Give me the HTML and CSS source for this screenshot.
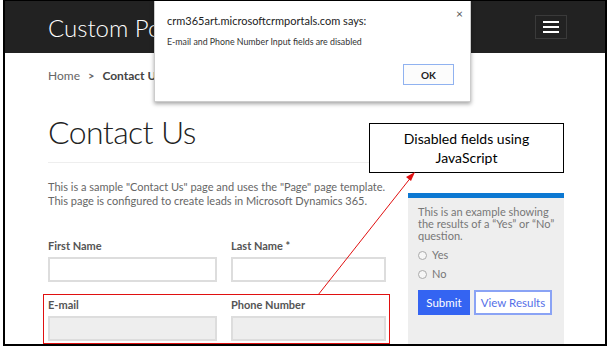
FILE: index.html
```html
<!DOCTYPE html>
<html lang="en">
  <head>
    <meta charset="UTF-8" />
    <meta name="viewport" content="width=device-width, initial-scale=1.0" />
    <title>Contact Us</title>
    <link rel="stylesheet" href="styles.css">
  </head>
  <body>
    <div class="frame">
      <header class="topbar">
        <span class="brand">Custom Portal</span>
        <button class="menu-toggle" type="button">
          <span></span><span></span><span></span>
        </button>
      </header>
      <div class="page">
        <ol class="crumbs">
          <li>Home</li>
          <li class="sep">&gt;</li>
          <li class="current">Contact Us</li>
        </ol>
        <div class="columns">
          <main class="main">
            <h1>Contact Us</h1>
            <p class="intro">This is a sample "Contact Us" page and uses the "Page" page template.<br>This page is configured to create leads in Microsoft Dynamics 365.</p>
            <form class="contact-form" action="#">
              <div class="field">
                <label for="firstname">First Name</label>
                <input type="text" id="firstname" />
              </div>
              <div class="field">
                <label for="lastname">Last Name *</label>
                <input type="text" id="lastname" />
              </div>
              <div class="field">
                <label for="email">E-mail</label>
                <input type="text" id="email" disabled />
              </div>
              <div class="field">
                <label for="phone">Phone Number</label>
                <input type="text" id="phone" disabled />
              </div>
            </form>
          </main>
          <aside class="poll">
            <p>This is an example showing<br>the results of a “Yes” or “No”<br>question.</p>
            <label class="option"><span class="radio"></span>Yes</label>
            <label class="option"><span class="radio"></span>No</label>
            <div class="poll-actions">
              <button class="btn-submit" type="button">Submit</button>
              <button class="btn-results" type="button">View Results</button>
            </div>
          </aside>
        </div>
      </div>

      <div class="dialog">
        <span class="dialog-close">×</span>
        <p class="dialog-title">crm365art.microsoftcrmportals.com says:</p>
        <p class="dialog-text">E-mail and Phone Number Input fields are disabled</p>
        <div class="dialog-actions">
          <button type="button">OK</button>
        </div>
      </div>

      <div class="highlight"></div>
      <div class="callout">Disabled fields using<br>JavaScript</div>
      <svg class="arrow" width="610" height="350" viewBox="0 0 610 350">
        <line x1="318" y1="295" x2="412" y2="176" stroke="#e01010" stroke-width="1" />
        <polygon points="415,172 406,177 411,181" fill="#e01010" />
      </svg>
    </div>
  </body>
</html>
```

FILE: styles.css
```css
* {
  margin: 0px;
  padding: 0px;
  box-sizing: border-box;
}
body {
  background-color: white;
  font-family: "Lato", "Liberation Sans", sans-serif;
}
.frame {
  position: relative;
  margin-left: 3px;
  width: 604px;
  height: 346px;
  border: 2px solid black;
  border-top-width: 1px;
  overflow: hidden;
  background-color: white;
}
.topbar {
  height: 52px;
  background-color: #222;
  display: flex;
  align-items: center;
  justify-content: space-between;
  padding-left: 43px;
  padding-right: 38px;
}
/* the alert box covers the rest of the brand name */
.brand {
  width: 106px;
  overflow: hidden;
  white-space: nowrap;
  color: white;
  font-size: 24px;
  font-weight: 300;
}
.menu-toggle {
  width: 32px;
  height: 24px;
  background-color: #222;
  border: 1px solid #3a3a3a;
  display: flex;
  flex-direction: column;
  align-items: center;
  justify-content: center;
  gap: 3px;
}
.menu-toggle span {
  display: block;
  width: 16px;
  height: 2px;
  background-color: white;
}
.page {
  padding-left: 43px;
}
.crumbs {
  list-style: none;
  display: flex;
  gap: 8px;
  margin-top: 15px;
  font-size: 12px;
  line-height: 16px;
  color: #666;
}
.crumbs .sep {
  font-size: 11px;
  font-weight: bold;
}
.crumbs .current {
  font-weight: bold;
  color: #444;
}
.columns {
  display: flex;
  gap: 10px;
}
.main {
  width: 350px;
}
h1 {
  font-size: 32px;
  font-weight: 300;
  letter-spacing: -0.6px;
  line-height: 40px;
  color: #222;
  margin-top: 28px;
  padding-bottom: 10px;
  border-bottom: 1px solid #eee;
}
.intro {
  margin-top: 17px;
  font-size: 11px;
  white-space: nowrap;
  line-height: 14px;
  color: #666;
}
.contact-form {
  display: grid;
  grid-template-columns: 169px 155px;
  column-gap: 14px;
  row-gap: 16px;
  margin-top: 31px;
}
.field label {
  display: block;
  font-size: 11px;
  font-weight: bold;
  color: #555;
  line-height: 14px;
  margin-bottom: 4px;
}
.field input {
  width: 100%;
  height: 25px;
  border: 2px solid #ddd;
  background-color: white;
}
.field input:disabled {
  background-color: #eee;
}
.poll {
  width: 156px;
  min-height: 200px;
  margin-top: 109px;
  border-top: 5px solid #0c78d2;
  background-color: #eee;
  padding: 8px 4px 8px 10px;
  color: #777;
  font-size: 11px;
}
.poll p {
  line-height: 12px;
  white-space: nowrap;
}
.option {
  display: flex;
  align-items: center;
  gap: 5px;
  margin-top: 7px;
  line-height: 12px;
}
.radio {
  width: 9px;
  height: 9px;
  border: 1px solid #aaa;
  border-radius: 50%;
  background-color: #f6f6f6;
}
.poll-actions {
  display: flex;
  gap: 4px;
  margin-top: 10px;
}
.poll-actions button {
  height: 25px;
  font-family: inherit;
  font-size: 11.5px;
}
.btn-submit {
  width: 52px;
  background-color: #3464f2;
  border: 1px solid #3464f2;
  color: white;
}
.btn-results {
  width: 78px;
  background-color: white;
  border: 2px solid #8aa3f5;
  color: #5570e8;
}

/* overlays: positions are page coords minus the frame border */
.dialog {
  position: absolute;
  left: 149px;
  top: -1px;
  width: 317px;
  height: 102px;
  background-color: white;
  border: 1px solid #ccc;
  box-shadow: 0 2px 4px rgba(0, 0, 0, 0.35);
  padding: 12px 16px 0 12px;
}
.dialog-close {
  position: absolute;
  right: 7px;
  top: 5px;
  font-size: 12px;
  color: #555;
}
.dialog-title {
  font-size: 11px;
  color: #222;
  line-height: 16px;
}
.dialog-text {
  margin-top: 7px;
  font-size: 8.8px;
  color: #333;
  line-height: 12px;
}
.dialog-actions {
  display: flex;
  justify-content: flex-end;
  margin-top: 16px;
}
.dialog-actions button {
  width: 51px;
  height: 21px;
  background-color: #fcfcfc;
  border: 1px solid #90b2f0;
  font-family: inherit;
  font-size: 10px;
  font-weight: bold;
  color: #222;
}
.highlight {
  position: absolute;
  left: 38px;
  top: 293px;
  width: 347px;
  height: 50px;
  border: 1.5px solid #e01010;
}
.callout {
  position: absolute;
  left: 364px;
  top: 122px;
  width: 195px;
  height: 50px;
  border: 1px solid black;
  background-color: white;
  font-size: 14px;
  line-height: 19px;
  padding-top: 5px;
  text-align: center;
  color: black;
}
.arrow {
  position: absolute;
  left: -5px;
  top: -1px;
}
```
